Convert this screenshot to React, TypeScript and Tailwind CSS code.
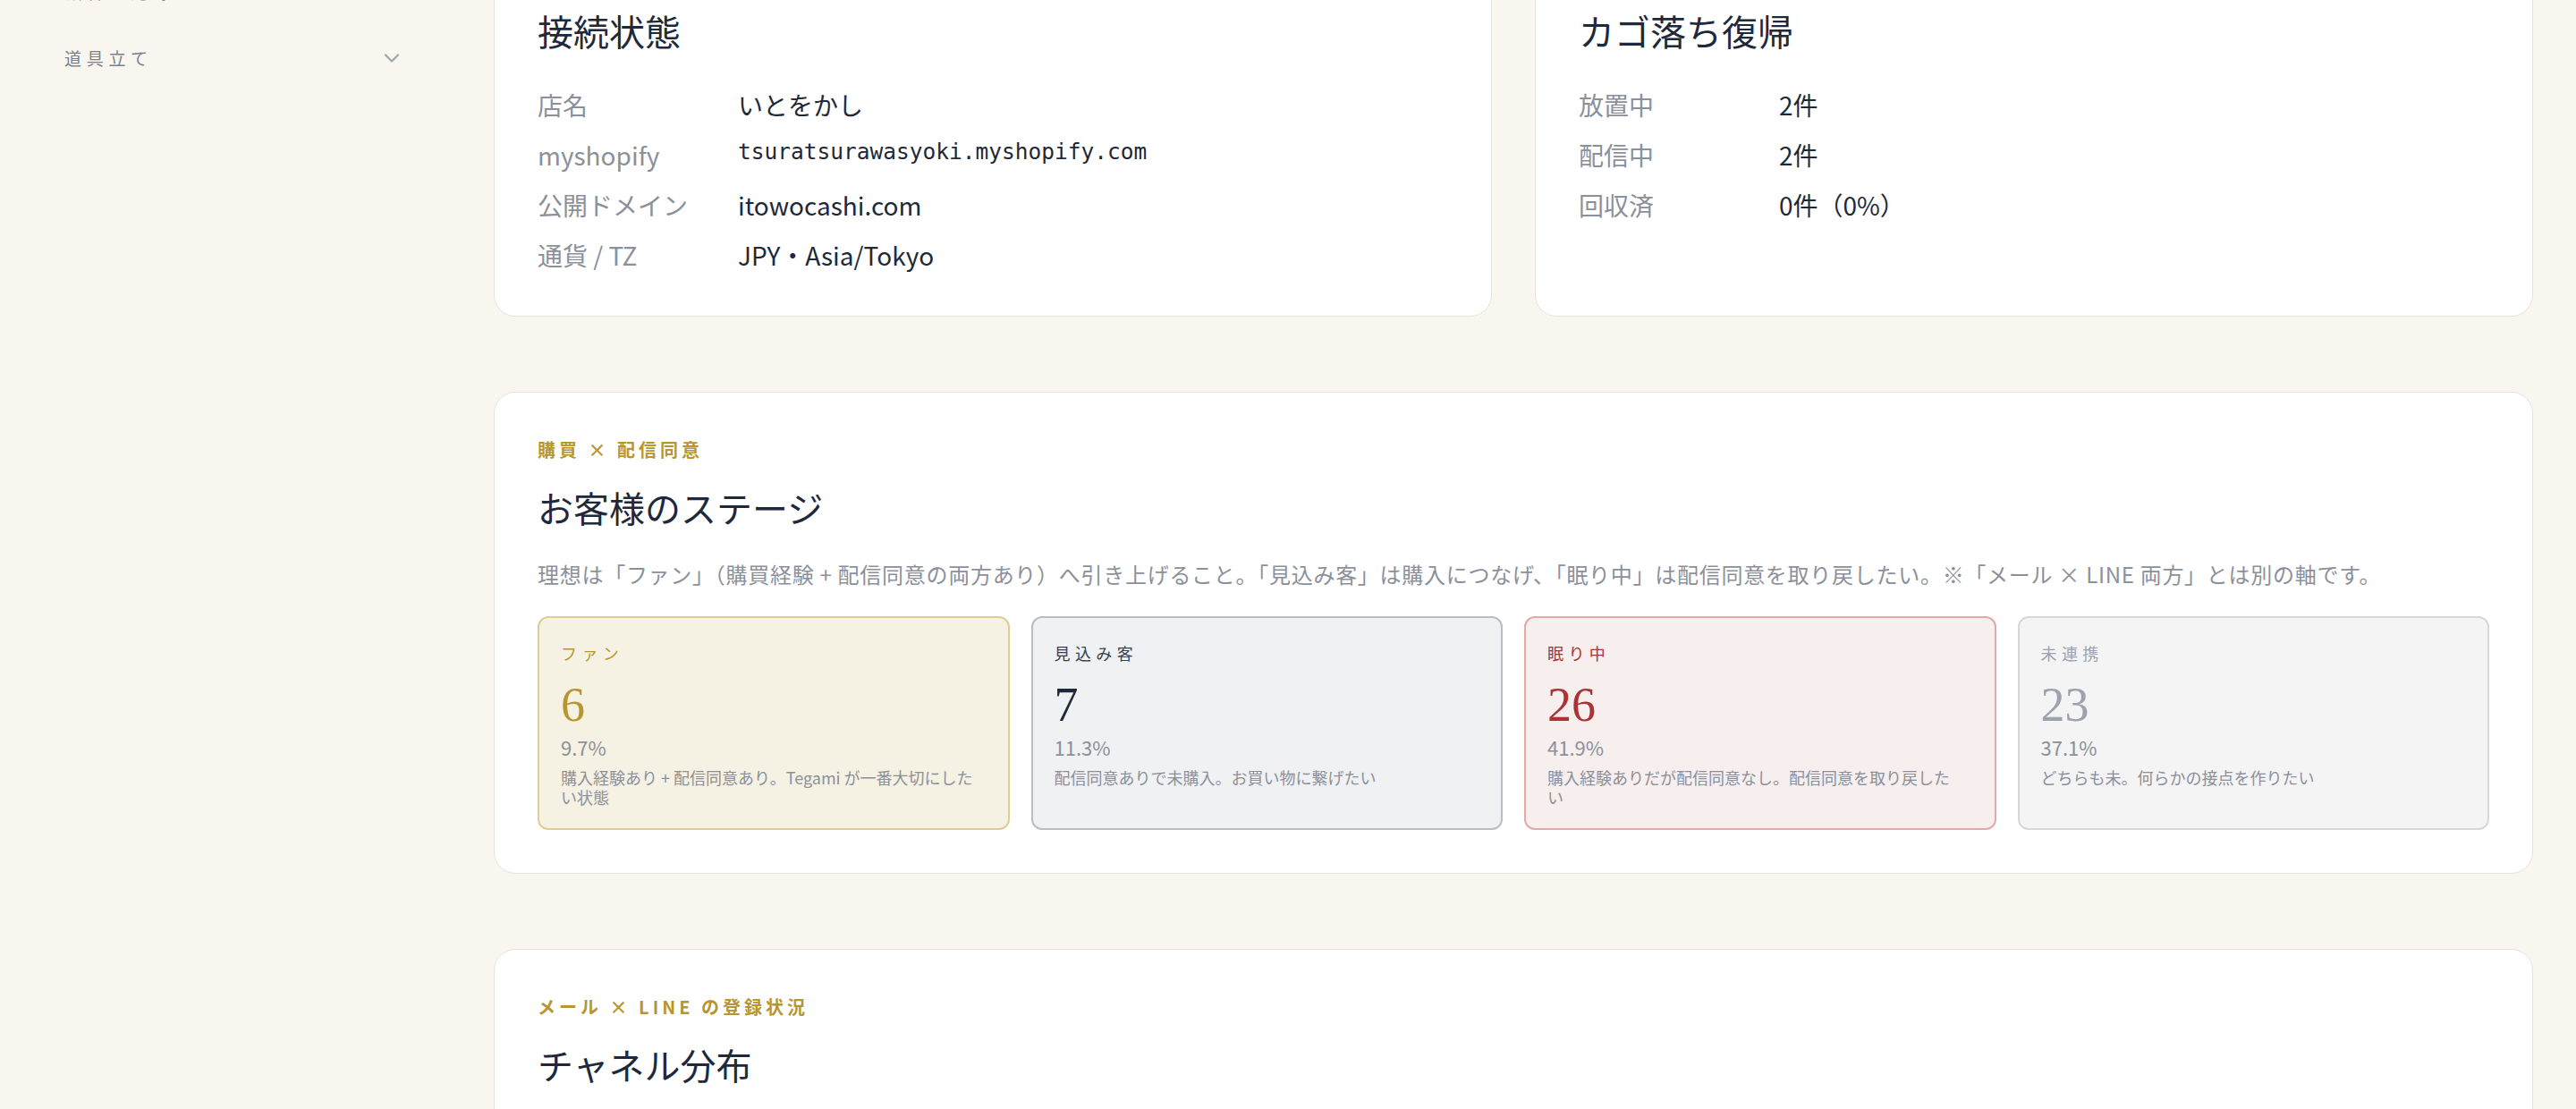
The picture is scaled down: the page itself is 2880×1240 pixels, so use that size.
import React from "react";
import { ChevronDown } from "lucide-react";

type Row = { label: string; value: string; mono?: boolean };

const shopRows: Row[] = [
  { label: "店名", value: "いとをかし" },
  { label: "myshopify", value: "tsuratsurawasyoki.myshopify.com", mono: true },
  { label: "公開ドメイン", value: "itowocashi.com" },
  { label: "通貨 / TZ", value: "JPY・Asia/Tokyo" },
];

const cartRows: Row[] = [
  { label: "放置中", value: "2件" },
  { label: "配信中", value: "2件" },
  { label: "回収済", value: "0件（0%）" },
];

type Stage = {
  name: string;
  count: number;
  pct: string;
  note: string;
  box: string;
  accent: string;
  num: string;
};

const stages: Stage[] = [
  {
    name: "ファン",
    count: 6,
    pct: "9.7%",
    note: "購入経験あり + 配信同意あり。Tegami が一番大切にしたい状態",
    box: "bg-[#f6f2e3] border-[#e0cd93]",
    accent: "text-[#b8962e]",
    num: "text-[#b8962e]",
  },
  {
    name: "見込み客",
    count: 7,
    pct: "11.3%",
    note: "配信同意ありで未購入。お買い物に繋げたい",
    box: "bg-[#f0f1f3] border-[#b9bdc4]",
    accent: "text-[#374151]",
    num: "text-[#1f2937]",
  },
  {
    name: "眠り中",
    count: 26,
    pct: "41.9%",
    note: "購入経験ありだが配信同意なし。配信同意を取り戻したい",
    box: "bg-[#f7eeee] border-[#e3a9a9]",
    accent: "text-[#a83434]",
    num: "text-[#a83434]",
  },
  {
    name: "未連携",
    count: 23,
    pct: "37.1%",
    note: "どちらも未。何らかの接点を作りたい",
    box: "bg-[#f4f4f5] border-[#d5d7db]",
    accent: "text-[#9ca3af]",
    num: "text-[#9ca3af]",
  },
];

const InfoRows: React.FC<{ rows: Row[] }> = ({ rows }) => (
  <dl className="mt-[31px] flex flex-col gap-4">
    {rows.map((r) => (
      <div key={r.label} className="flex items-start">
        <dt className="w-[224px] shrink-0 text-[28px] leading-[40px] text-[#8b909a]">{r.label}</dt>
        <dd
          className={
            r.mono
              ? "font-['DejaVu_Sans_Mono','Liberation_Mono',monospace] text-[24.5px] leading-[34px] text-[#1f2937]"
              : "text-[28px] leading-[40px] text-[#1f2937]"
          }
        >
          {r.value}
        </dd>
      </div>
    ))}
  </dl>
);

const Panel: React.FC<{ children: React.ReactNode; className?: string }> = ({ children, className }) => (
  <section className={`rounded-3xl border border-[#e6e4df] bg-white ${className ?? "p-12"}`}>{children}</section>
);

const Title: React.FC<{ children: React.ReactNode; className?: string }> = ({ children, className }) => (
  <h2
    className={`font-['Liberation_Serif','Noto_Sans_CJK_JP',serif] text-[40px] leading-[56px] font-normal text-[#1e293b] ${className ?? ""}`}
  >
    {children}
  </h2>
);

const Kicker: React.FC<{ children: React.ReactNode }> = ({ children }) => (
  <p className="text-[20px] leading-[32px] font-bold tracking-[0.2em] text-[#b8962e]">{children}</p>
);

export default function App() {
  return (
    <div className="min-h-screen flex bg-[#f9f5ef] font-['Noto_Sans_CJK_JP','Noto_Sans',sans-serif] overflow-hidden">
      <aside className="w-[504px] shrink-0 px-6">
        <nav className="-mt-[45px] flex flex-col">
          <div className="h-[72px] flex items-center justify-between pl-12 pr-7 text-[19px] tracking-[0.3em] text-[#7b808a]">
            <span>顧客の記録</span>
            <ChevronDown size={28} strokeWidth={2} className="text-[#a3a7af]" />
          </div>
          <div className="h-[76px] flex items-center justify-between pl-12 pr-7 text-[19px] tracking-[0.3em] text-[#7b808a]">
            <span>道具立て</span>
            <ChevronDown size={28} strokeWidth={2} className="text-[#a3a7af]" />
          </div>
        </nav>
      </aside>

      <main className="flex-1 px-12">
        <div className="-mt-[39px] flex flex-col gap-[84px] pb-24">
          <div className="grid grid-cols-2 gap-12">
            <Panel className="px-12 pt-12 pb-12">
              <Title>接続状態</Title>
              <InfoRows rows={shopRows} />
            </Panel>
            <Panel className="px-12 pt-12 pb-12">
              <Title>カゴ落ち復帰</Title>
              <InfoRows rows={cartRows} />
            </Panel>
          </div>

          <Panel>
            <Kicker>購買 × 配信同意</Kicker>
            <Title className="mt-6">お客様のステージ</Title>
            <p className="mt-[25px] text-[24px] leading-[36px] tracking-[0.03em] text-[#8b909a]">
              理想は「ファン」（購買経験 + 配信同意の両方あり）へ引き上げること。「見込み客」は購入につなげ、「眠り中」は配信同意を取り戻したい。※「メール × LINE 両方」とは別の軸です。
            </p>
            <div className="mt-[29px] grid grid-cols-4 gap-6">
              {stages.map((s) => (
                <div key={s.name} className={`rounded-xl border-2 p-6 ${s.box}`}>
                  <p className={`text-[18px] leading-[30px] tracking-[0.3em] ${s.accent}`}>{s.name}</p>
                  <p className={`mt-4 font-['Liberation_Serif',serif] text-[54px] leading-none ${s.num}`}>{s.count}</p>
                  <p className="mt-[5px] text-[22px] leading-[30px] text-[#8b909a]">{s.pct}</p>
                  <p className="mt-2 pr-3 text-[18px] leading-[22px] text-[#8b909a]">{s.note}</p>
                </div>
              ))}
            </div>
          </Panel>

          <Panel>
            <Kicker>メール × LINE の登録状況</Kicker>
            <Title className="mt-6">チャネル分布</Title>
            <p className="mt-[26px] text-[24px] leading-[36px] tracking-[0.03em] text-[#8b909a]">
              メールと LINE の登録状況ごとにお客様を分けています。
            </p>
            <div className="mt-8 h-[240px] rounded-xl border border-[#e6e4df] bg-[#faf8f4]" />
          </Panel>
        </div>
      </main>
    </div>
  );
}
